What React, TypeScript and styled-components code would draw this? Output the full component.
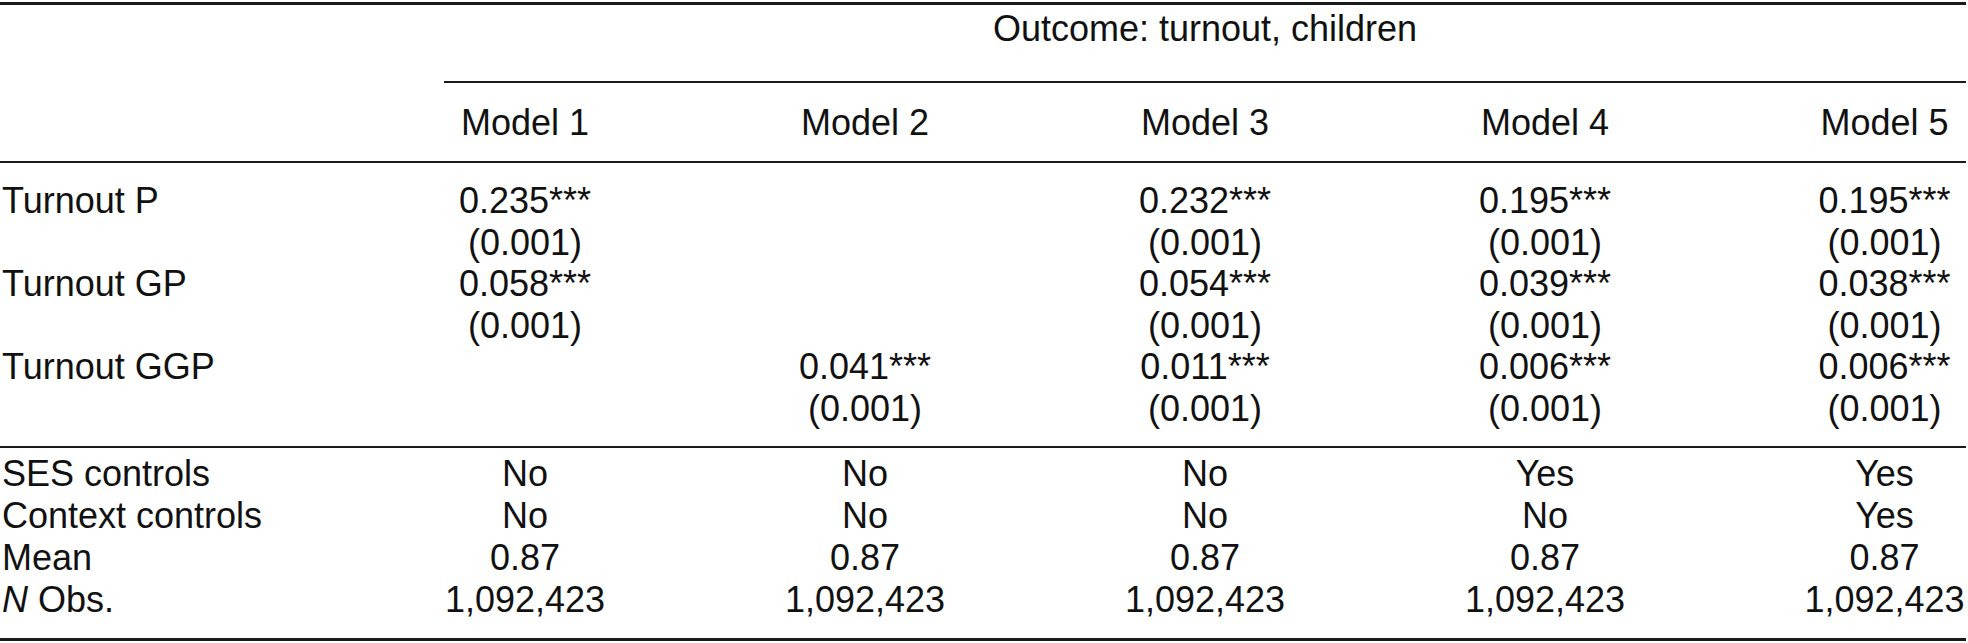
import React from 'react';
import styled, { createGlobalStyle } from 'styled-components';

type CoefRow = {
    label: string;
    coef: string[];
    se: string[];
};

type StatRow = {
    label: string;
    italicN?: boolean;
    values: string[];
};

const models = ['Model 1', 'Model 2', 'Model 3', 'Model 4', 'Model 5'];

const coefRows: CoefRow[] = [
    {
        label: 'Turnout P',
        coef: ['0.235***', '', '0.232***', '0.195***', '0.195***'],
        se: ['(0.001)', '', '(0.001)', '(0.001)', '(0.001)'],
    },
    {
        label: 'Turnout GP',
        coef: ['0.058***', '', '0.054***', '0.039***', '0.038***'],
        se: ['(0.001)', '', '(0.001)', '(0.001)', '(0.001)'],
    },
    {
        label: 'Turnout GGP',
        coef: ['', '0.041***', '0.011***', '0.006***', '0.006***'],
        se: ['', '(0.001)', '(0.001)', '(0.001)', '(0.001)'],
    },
];

const statRows: StatRow[] = [
    { label: 'SES controls', values: ['No', 'No', 'No', 'Yes', 'Yes'] },
    { label: 'Context controls', values: ['No', 'No', 'No', 'No', 'Yes'] },
    { label: 'Mean', values: ['0.87', '0.87', '0.87', '0.87', '0.87'] },
    {
        label: 'Obs.',
        italicN: true,
        values: ['1,092,423', '1,092,423', '1,092,423', '1,092,423', '1,092,423'],
    },
];

export default function App() {
    const renderCells = (values: string[]) =>
        values.map((v, i) => (
            <Cell key={i} $last={i === values.length - 1}>{v}</Cell>
        ));

    return (
        <>
            <GlobalStyle />
            <Table>
                <Head>
                    <Row>
                        <Label />
                        <SpanCell>Outcome: turnout, children</SpanCell>
                    </Row>
                    <ModelRow>
                        <Label />
                        {renderCells(models)}
                    </ModelRow>
                </Head>

                <Body>
                    {coefRows.map((row) => (
                        <React.Fragment key={row.label}>
                            <Row>
                                <Label>{row.label}</Label>
                                {renderCells(row.coef)}
                            </Row>
                            <Row>
                                <Label />
                                {renderCells(row.se)}
                            </Row>
                        </React.Fragment>
                    ))}
                </Body>

                <Stats>
                    {statRows.map((row) => (
                        <Row key={row.label} $lineHeight={42}>
                            <Label>
                                {row.italicN && <Italic>N </Italic>}
                                {row.label}
                            </Label>
                            {renderCells(row.values)}
                        </Row>
                    ))}
                </Stats>
            </Table>
        </>
    );
}

const GlobalStyle = createGlobalStyle`
    html, body {
        margin: 0;
        padding: 0;
        background: #fff;
    }
    body {
        font-family: "Liberation Sans", Arial, Helvetica, sans-serif;
        color: #111;
    }
`;

const Table = styled.div`
    width: 1966px;
    margin-top: 2px;
    border-top: 3px solid #1a1a1a;
    border-bottom: 3px solid #1a1a1a;
    font-size: 36px;
`;

const Row = styled.div<{ $lineHeight?: number }>`
    display: grid;
    grid-template-columns: 355px 340px 340px 340px 340px 251px;
    line-height: ${(props) => props.$lineHeight ?? 41.5}px;
    white-space: pre;
`;

const Head = styled.div`
    border-bottom: 2px solid #1a1a1a;
`;

const ModelRow = styled(Row)`
    padding: 19px 0 17.5px;
`;

const SpanCell = styled.div`
    grid-column: 2 / -1;
    margin-left: 89px;
    padding: 3px 0 31.5px;
    border-bottom: 2px solid #1a1a1a;
    text-align: center;
`;

const Body = styled.div`
    padding: 17px 0;
    border-bottom: 2px solid #1a1a1a;
`;

const Stats = styled.div`
    padding: 5px 0 17px;
`;

const Label = styled.div`
    padding-left: 2px;
`;

const Cell = styled.div<{ $last?: boolean }>`
    text-align: center;
    padding-left: ${(props) => (props.$last ? '88px' : '0')};
`;

const Italic = styled.span`
    font-style: italic;
`;
